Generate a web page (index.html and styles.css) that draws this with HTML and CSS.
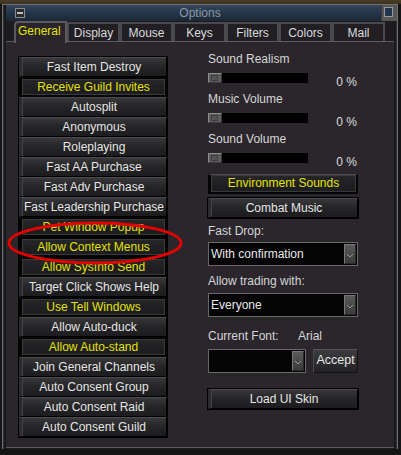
FILE: index.html
```html
<!DOCTYPE html>
<html lang="en-US">
  <head>
    <title>Options</title>
    <link rel="stylesheet" href="styles.css">
  </head>
  <body>
    <div class="window">
      <div class="titlebar">
        <span class="min-btn"></span>
        <span class="title">Options</span>
        <span class="corner"><span></span></span>
      </div>
      <div class="tabs">
        <span class="tab active">General</span>
        <span class="tab">Display</span>
        <span class="tab">Mouse</span>
        <span class="tab">Keys</span>
        <span class="tab">Filters</span>
        <span class="tab">Colors</span>
        <span class="tab">Mail</span>
      </div>
      <div class="panel">
        <ul class="toggles">
          <li class="btn">Fast Item Destroy</li>
          <li class="btn on">Receive Guild Invites</li>
          <li class="btn">Autosplit</li>
          <li class="btn">Anonymous</li>
          <li class="btn">Roleplaying</li>
          <li class="btn">Fast AA Purchase</li>
          <li class="btn">Fast Adv Purchase</li>
          <li class="btn">Fast Leadership Purchase</li>
          <li class="btn on">Pet Window Popup</li>
          <li class="btn on">Allow Context Menus</li>
          <li class="btn on">Allow SysInfo Send</li>
          <li class="btn">Target Click Shows Help</li>
          <li class="btn on">Use Tell Windows</li>
          <li class="btn">Allow Auto-duck</li>
          <li class="btn on">Allow Auto-stand</li>
          <li class="btn">Join General Channels</li>
          <li class="btn">Auto Consent Group</li>
          <li class="btn">Auto Consent Raid</li>
          <li class="btn">Auto Consent Guild</li>
        </ul>

        <div class="settings">
          <div class="slider-group">
            <div class="label">Sound Realism</div>
            <div class="slider-row"><span class="track"><span class="thumb"></span></span><span class="pct">0 %</span></div>
          </div>
          <div class="slider-group">
            <div class="label">Music Volume</div>
            <div class="slider-row"><span class="track"><span class="thumb"></span></span><span class="pct">0 %</span></div>
          </div>
          <div class="slider-group">
            <div class="label">Sound Volume</div>
            <div class="slider-row"><span class="track"><span class="thumb"></span></span><span class="pct">0 %</span></div>
          </div>

          <div class="btn wide on env">Environment Sounds</div>
          <div class="btn wide combat">Combat Music</div>

          <div class="label drop-label">Fast Drop:</div>
          <div class="select">
            <span class="value">With confirmation</span>
            <span class="arrow"><svg width="8" height="5" viewBox="0 0 8 5"><polyline points="1,1 4,4 7,1" fill="none" stroke="#9a9a9a" stroke-width="1"/></svg></span>
          </div>

          <div class="label drop-label trade">Allow trading with:</div>
          <div class="select">
            <span class="value">Everyone</span>
            <span class="arrow"><svg width="8" height="5" viewBox="0 0 8 5"><polyline points="1,1 4,4 7,1" fill="none" stroke="#9a9a9a" stroke-width="1"/></svg></span>
          </div>

          <div class="font-line">
            <span class="font-label">Current Font:</span>
            <span>Arial</span>
          </div>
          <div class="font-row">
            <div class="select font-select">
              <span class="value"></span>
              <span class="arrow"><svg width="8" height="5" viewBox="0 0 8 5"><polyline points="1,1 4,4 7,1" fill="none" stroke="#9a9a9a" stroke-width="1"/></svg></span>
            </div>
            <div class="accept">Accept</div>
          </div>

          <div class="btn wide skin">Load UI Skin</div>
        </div>
      </div>
    </div>

    <svg class="callout" width="184" height="48" viewBox="0 0 184 48">
      <ellipse cx="89" cy="22" rx="86" ry="20" fill="none" stroke="#e30000" stroke-width="3"/>
    </svg>
  </body>
</html>
```

FILE: styles.css
```css
body {
  margin: 0;
  background: linear-gradient(to bottom, #4b3e25 0, #3b311f 4px, #151515 4px);
  font-family: "Liberation Sans", Arial, sans-serif;
  font-size: 12px;
  color: #dcdcdc;
  position: relative;
  height: 455px;
  overflow: hidden;
}

.window {
  margin: 4px 3px 0 2px;
  border: 1px solid #707070;
  border-bottom: none;
  padding: 0 3px 1px 3px;
  background: #1b191d;
  box-shadow: inset 1px 0 #2e2e2e, inset -1px 0 #2e2e2e;
}

/* title bar */
.titlebar {
  display: grid;
  grid-template-columns: 1fr auto 1fr;
  align-items: center;
  height: 16px;
  background: linear-gradient(to bottom, #33465d, #233246 60%, #1c2838);
}
.min-btn {
  justify-self: start;
  margin-left: 9px;
  width: 8px;
  height: 8px;
  border: 1px solid #8a8a8a;
  background: #2c2c2c;
  position: relative;
}
.min-btn::after {
  content: "";
  position: absolute;
  left: 1px;
  right: 1px;
  top: 3px;
  height: 2px;
  background: #bdbdbd;
}
.title {
  color: #8e97a3;
  font-size: 12px;
  line-height: 16px;
}
.corner {
  justify-self: end;
  width: 16px;
  height: 16px;
  margin-right: -3px;
  background: #565656;
  border-left: 1px solid #3a3a3a;
  box-sizing: border-box;
  padding: 2px 4px 2px 2px;
}
.corner span {
  display: block;
  width: 9px;
  height: 10px;
  border: 1px solid #9a9a9a;
  box-sizing: border-box;
  background: #22354c;
}

/* tabs */
.tabs {
  display: flex;
  height: 20px;
  padding-left: 8px;
  align-items: flex-end;
  background: #1d1b20;
}
.tab {
  width: 53px;
  height: 19px;
  box-sizing: border-box;
  border: 2px solid #4a4a4c;
  border-bottom: none;
  background: #211e24;
  color: #dadada;
  text-align: center;
  line-height: 18px;
}
.tab.active {
  height: 22px;
  margin-bottom: -2px;
  position: relative;
  z-index: 1;
  color: #e3e300;
  background: #29252b;
  border-color: #5a5a5c;
  border-top-left-radius: 4px;
  line-height: 16px;
  text-align: left;
  padding-left: 2px;
}

/* main panel */
.panel {
  display: flex;
  gap: 40px;
  height: 407px;
  box-sizing: border-box;
  padding: 10px 0 0 12px;
  background: #2a262c;
  border-top: 1px solid #5c5c5e;
  border-bottom: 1px solid #5c5c5e;
}

.toggles {
  list-style: none;
  margin: 4px 0 0 0;
  padding: 0;
  width: 150px;
  height: 382px;
  box-sizing: border-box;
  border: 1px solid #000;
  background: #0e0e0e;
}

.btn {
  display: block;
  height: 20px;
  box-sizing: border-box;
  border: 1px solid #000;
  border-top-color: #4c4c4e;
  border-left: 3px solid #2c2c2e;
  background: linear-gradient(to bottom, #38383a, #262628 45%, #1c1c1e);
  box-shadow: inset 1px 0 #444446;
  color: #e6e6e6;
  text-align: center;
  line-height: 18px;
  white-space: nowrap;
  cursor: pointer;
}
.btn.on {
  border: 2px solid #050505;
  border-left-width: 3px;
  background: linear-gradient(to bottom, #262628, #1b1b1d);
  box-shadow: inset 0 0 1px 1px #3c3c3e;
  color: #e2e200;
  line-height: 16px;
}

/* right column */
.settings {
  width: 150px;
}
.label {
  line-height: 14px;
  height: 14px;
  color: #d6d6d6;
}
.slider-group {
  height: 40px;
}
.slider-row {
  display: flex;
  justify-content: space-between;
  margin-top: 6px;
  height: 14px;
}
.track {
  display: block;
  width: 100px;
  height: 10px;
  margin-top: 1px;
  background: #000;
}
.thumb {
  display: block;
  width: 14px;
  height: 10px;
  box-sizing: border-box;
  border: 1px solid #8c8c8c;
  border-right-color: #3a3a3a;
  border-bottom-color: #3a3a3a;
  background: #5e5e5e;
  position: relative;
}
.thumb::after {
  content: "";
  position: absolute;
  left: 2px;
  top: 1px;
  width: 5px;
  height: 4px;
  border: 1px solid #3c3c3c;
  background: #555;
}
.pct {
  padding: 3px 1px 0 0;
  line-height: 14px;
  color: #dcdcdc;
}

.btn.wide {
  border-top: 1px solid #4c4c4e;
  outline: 1px solid #000;
}
.env {
  margin-top: 2px;
  outline: none !important;
}
.combat {
  margin-top: 4px;
}
.drop-label {
  margin-top: 6px;
}
.trade {
  margin-top: 8px;
}

.select {
  display: flex;
  align-items: center;
  justify-content: space-between;
  height: 24px;
  margin-top: 4px;
  box-sizing: border-box;
  border: 1px solid #686868;
  background: #050505;
  padding: 1px 1px 1px 2px;
}
.trade + .select {
  margin-top: 5px;
}
.value {
  color: #e8e8e8;
  line-height: 20px;
}
.arrow {
  display: flex;
  align-items: flex-end;
  justify-content: center;
  width: 12px;
  height: 20px;
  box-sizing: border-box;
  padding-bottom: 5px;
  background: linear-gradient(to bottom, #5a5a5a, #3a3a3a);
  border: 1px solid #777;
  border-right-color: #2a2a2a;
  border-bottom-color: #2a2a2a;
}

.font-line {
  display: flex;
  margin-top: 12px;
  line-height: 14px;
  color: #d6d6d6;
}
.font-label {
  width: 90px;
}
.font-row {
  display: flex;
  gap: 7px;
  margin-top: 6px;
}
.font-select {
  width: 109px;
  margin-top: 0;
}
.accept {
  width: 50px;
  height: 24px;
  box-sizing: border-box;
  border: 1px solid #111;
  border-top-color: #555;
  border-left-color: #4a4a4a;
  background: linear-gradient(to bottom, #3c3c3e, #222224);
  color: #e6e6e6;
  text-align: center;
  line-height: 21px;
  font-size: 12.5px;
}
.skin {
  margin-top: 16px;
}

/* red annotation ring over the list */
.callout {
  position: absolute;
  left: 6px;
  top: 221px;
}
```
